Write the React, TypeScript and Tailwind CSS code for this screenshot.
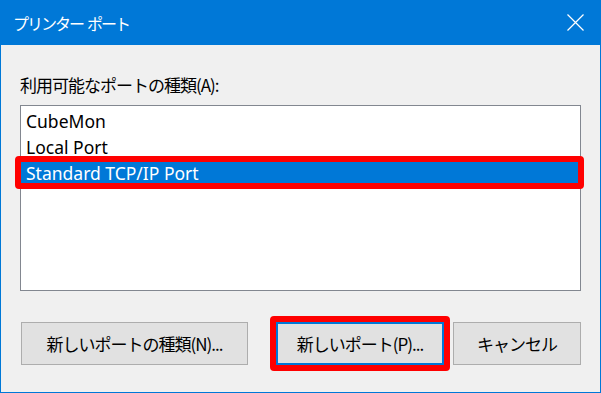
import React from "react";

const ui = "font-['Noto_Sans','Noto_Sans_CJK_JP',sans-serif]";
const jp = "font-['Noto_Sans_CJK_JP','Noto_Sans',sans-serif]";

export default function App() {
  return (
    <div className={`w-[601px] h-[393px] bg-[#f0f0f0] border border-t-0 border-[#0078d7] flex flex-col ${ui} text-black`}>
      <div className="h-[45px] bg-[#0078d7] flex items-center justify-between pl-[12px] pr-[16px] shrink-0">
        <span className={`${jp} text-white text-[16px] tracking-[-2px] leading-none flex`}>
          <span>プリンター</span>
          <span className="w-[4px]" />
          <span>ポート</span>
        </span>
        <svg width="17" height="17" viewBox="0 0 17 17" className="block">
          <path d="M0.5 0.5 L16.5 16.5 M16.5 0.5 L0.5 16.5" stroke="white" strokeWidth="1.2" fill="none" />
        </svg>
      </div>
      <div className="flex flex-col px-[19px]">
        <div className={`${jp} text-[17px] tracking-[-1px] leading-[20px] mt-[30px]`}>利用可能なポートの種類(A):</div>
        <div className="relative mt-[10px] h-[186px] border border-[#828790] bg-white pt-[2px]">
          <div className="h-[26px] flex items-center pl-[5px] text-[17.5px]">CubeMon</div>
          <div className="h-[26px] flex items-center pl-[5px] text-[17.5px]">Local Port</div>
          <div className="h-[26px] flex items-center pl-[5px] text-[17.5px] bg-[#0078d7] text-white">Standard TCP/IP Port</div>
          <div className="absolute left-[-6px] top-[50px] w-[569px] h-[33px] border-[6px] border-[#ff0000] rounded-[4px]" />
        </div>
        <div className={`${jp} flex mt-[31px] text-[17px] tracking-[-1px]`}>
          <button className="ml-[1px] w-[227px] h-[43px] bg-[#e1e1e1] border border-[#adadad] flex items-center justify-center">
            新しいポートの種類(N)...
          </button>
          <div className="relative ml-[28px]">
            <button className="w-[168px] h-[43px] bg-[#e1e1e1] border-2 border-[#0078d7] flex items-center justify-center">
              新しいポート(P)...
            </button>
            <div className="absolute left-[-6px] top-[-6px] w-[180px] h-[55px] border-[6px] border-[#ff0000] rounded-[4px]" />
          </div>
          <button className="ml-[9px] w-[128px] h-[43px] bg-[#e1e1e1] border border-[#adadad] flex items-center justify-center">
            キャンセル
          </button>
        </div>
      </div>
    </div>
  );
}
